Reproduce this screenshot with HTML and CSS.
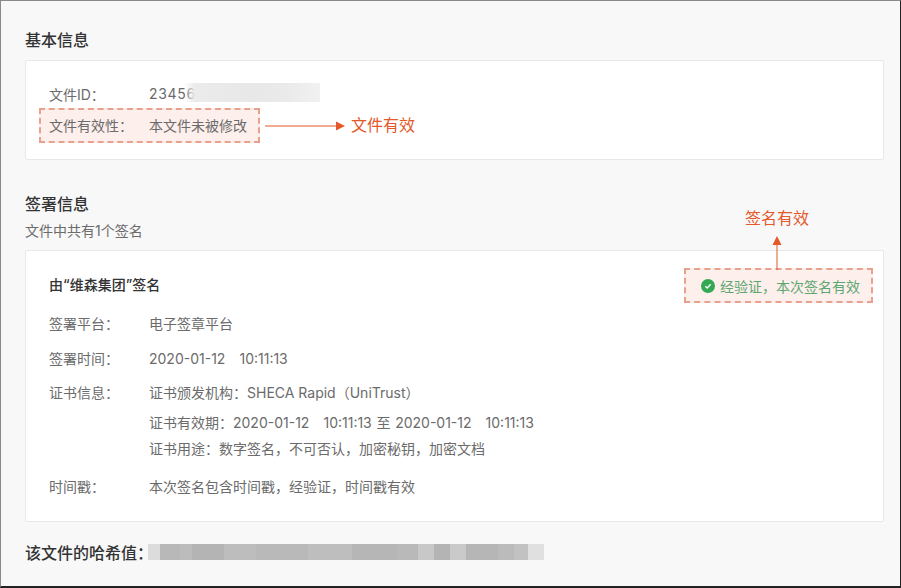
FILE: index.html
```html
<!DOCTYPE html>
<html lang="zh-CN">
<head>
<meta charset="utf-8">
<title>文件验证</title>
<link rel="stylesheet" href="styles.css">
</head>
<body>
<main class="frame">
  <section class="basic">
    <h2 class="title">基本信息</h2>
    <div class="card card-basic">
      <div class="row-basic"><span class="label">文件ID：</span><span class="value-id">23456</span><span class="blur-id"></span></div>
      <div class="row-basic"><span class="label">文件有效性：</span><span>本文件未被修改</span></div>
      <div class="mark mark-file"></div>
      <svg class="arrow-right" width="80" height="12" viewBox="0 0 80 12"><path d="M0 6H72" stroke="#e4582a" stroke-width="1"/><path d="M71 1.500L80 6L71 10.500z" fill="#e4582a"/></svg>
      <span class="note note-file">文件有效</span>
    </div>
  </section>
  <section class="sign">
    <h2 class="title">签署信息</h2>
    <p class="sub">文件中共有1个签名</p>
    <div class="card card-sign">
      <h3 class="signer">由“维森集团”签名</h3>
      <dl class="list">
        <div class="row r-platform"><dt>签署平台：</dt><dd>电子签章平台</dd></div>
        <div class="row r-time"><dt>签署时间：</dt><dd class="stamp">2020-01-12&nbsp;&nbsp;&nbsp;10:11:13</dd></div>
        <div class="row r-cert"><dt>证书信息：</dt><dd>
          <p class="c1">证书颁发机构：SHECA Rapid（UniTrust）</p>
          <p class="c2 stamp">证书有效期：2020-01-12&nbsp;&nbsp;&nbsp;10:11:13 至 2020-01-12&nbsp;&nbsp;&nbsp;10:11:13</p>
          <p class="c3">证书用途：数字签名，不可否认，加密秘钥，加密文档</p>
        </dd></div>
        <div class="row r-stamp"><dt>时间戳：</dt><dd>本次签名包含时间戳，经验证，时间戳有效</dd></div>
      </dl>
      <div class="mark mark-sign">
        <svg class="check" width="14" height="14" viewBox="0 0 14 14"><circle cx="7" cy="7" r="7" fill="#34a853"/><path d="M4.300 7.200L6.200 9L9.700 5.300" fill="none" stroke="#fff" stroke-width="1.300"/></svg>
        <span>经验证，本次签名有效</span>
      </div>
      <svg class="arrow-up" width="12" height="34" viewBox="0 0 12 34"><path d="M6 8V34" stroke="#e4582a" stroke-width="1"/><path d="M1.500 9L6 0L10.500 9z" fill="#e4582a"/></svg>
      <span class="note note-sign">签名有效</span>
    </div>
  </section>
  <p class="hash"><strong>该文件的哈希值：</strong><span class="mosaic"></span></p>
</main>
</body>
</html>
```
FILE: styles.css
```css
* { box-sizing: border-box; }
html, body { margin: 0; padding: 0; }
body {
  width: 901px;
  height: 588px;
  overflow: hidden;
  font-family: Inter, "Noto Sans CJK SC", sans-serif;
  background: #f8f8f9;
}
.frame {
  width: 901px;
  height: 588px;
  padding: 28px 16px 0 24px;
  border-top: 1px solid #8a8a8a;
  border-left: 1px solid #8a8a8a;
  border-right: 1px solid #222;
  border-bottom: 2px solid #222;
  background: #f8f8f9;
  color: #6b6b6b;
  font-size: 14px;
}
.title {
  margin: 0;
  font-size: 16px;
  font-weight: 500;
  line-height: 22px;
  color: #333;
}
.card {
  position: relative;
  background: #fff;
  border: 1px solid #e8e8e8;
  border-radius: 2px;
}
.card-basic {
  height: 100px;
  margin-top: 9px;
  padding: 17px 23px 0;
}
.row-basic {
  display: flex;
  align-items: center;
  height: 31px;
  position: relative;
}
.label { width: 100px; flex: none; }
.value-id { letter-spacing: 0.7px; }
.blur-id {
  position: absolute;
  left: 135px;
  top: 5px;
  width: 136px;
  height: 19px;
  background: linear-gradient(90deg, rgba(240, 240, 240, 0) 0, #ebebeb 8%, #e8e8e8 50%, #eaeaea 75%, #f1f1f1 100%);
}
.mark {
  position: absolute;
  background: #fdefeb;
  border: 2px dashed #e9a08c;
}
.mark-file {
  left: 13px;
  top: 47px;
  width: 221px;
  height: 35px;
  z-index: 0;
}
.row-basic:nth-child(2) { z-index: 1; }
.arrow-right { position: absolute; left: 239px; top: 59px; }
.note {
  position: absolute;
  font-size: 16px;
  line-height: 22px;
  color: #e4582a;
  white-space: nowrap;
}
.note-file { left: 325px; top: 53px; }
.sign { margin-top: 33px; }
.sub { margin: 5px 0 8px; line-height: 22px; }
.card-sign {
  height: 272px;
  padding: 23px 23px 0;
}
.signer {
  margin: 0;
  font-size: 14px;
  line-height: 22px;
  font-weight: 500;
  color: #333;
}
.list { margin: 0; }
.row { display: flex; line-height: 22px; }
.row dt { width: 100px; flex: none; }
.row dd { margin: 0; }
.row p { margin: 0; line-height: 22px; }
.stamp { word-spacing: 0.75px; }
.r-platform { margin-top: 17px; }
.r-time { margin-top: 13px; }
.r-cert { margin-top: 12px; }
.c2 { margin-top: 8px !important; }
.c3 { margin-top: 4px !important; }
.r-stamp { margin-top: 16px; }
.mark-sign {
  right: 10px;
  top: 17px;
  width: 189px;
  height: 35px;
  display: flex;
  align-items: center;
  gap: 5px;
  padding-left: 15px;
  font-size: 14px;
  color: #5da672;
  z-index: 1;
}
.check { flex: none; }
.arrow-up { position: absolute; left: 745px; top: -15px; z-index: 2; }
.note-sign { left: 719px; top: -44px; }
.hash {
  display: flex;
  align-items: center;
  margin: 19px 0 0;
  height: 22px;
}
.hash strong {
  width: 123px;
  flex: none;
  font-size: 16px;
  font-weight: 500;
  white-space: nowrap;
  color: #333;
}
.mosaic {
  width: 396px;
  height: 16px;
  background: linear-gradient(90deg,
    #dcdcdc 0 12px, #b8b8b8 12px 32px, #bcbcbc 32px 44px, #b4b4b4 44px 76px,
    #bdbdbd 76px 108px, #b9b9b9 108px 160px, #bebebe 160px 204px, #b6b6b6 204px 250px,
    #b9b9b9 250px 270px, #c8c8c8 270px 286px, #b4b4b4 286px 302px, #cacaca 302px 318px,
    #b6b6b6 318px 350px, #bbbbbb 350px 366px, #c2c2c2 366px 380px, #e0e0e0 380px 396px);
}
```
